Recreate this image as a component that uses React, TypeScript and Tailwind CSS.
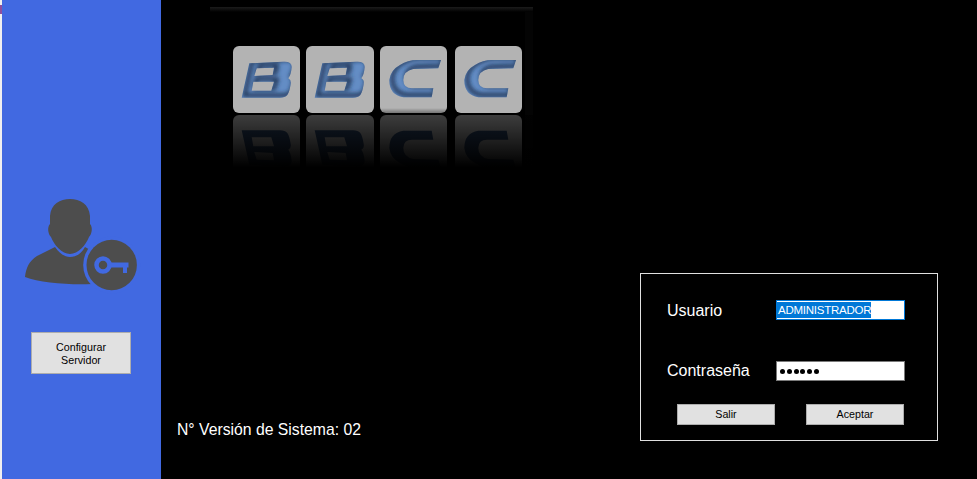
import React from 'react';

const B_PATH =
  'M8.7 51.7 L16.3 17.3 L50 15.7 Q58.7 15 58.7 21 Q58 29 55.3 32.3 Q58.5 34 57.7 38 Q56.5 46 54.3 49 Q52 51.7 47 51.7 Z M23.7 22.3 L21.3 30 L39.7 29 L41 21.7 Z M20.3 35.7 L18.7 44.7 L38.3 44.7 L41 35.7 Z';
const C_PATH =
  'M61 14 L58.3 22.3 L33.3 23 Q23.3 25 23.3 34 Q23.5 42.3 32 42.3 L53.3 42.3 L51.7 51.3 L23.3 51.3 Q9.3 49 9.3 34 Q10.5 24 20 19 Q28 14 36.7 14 Z';

const TILES = [
  { x: 23, w: 67, path: B_PATH, id: 'b1' },
  { x: 96, w: 68, path: B_PATH, id: 'b2' },
  { x: 170, w: 67, path: C_PATH, id: 'c1' },
  { x: 245, w: 67, path: C_PATH, id: 'c2' },
];

const LogoTile = ({ tile }: { tile: (typeof TILES)[number] }) => (
  <g transform={`translate(${tile.x} 0)`}>
    <rect width={tile.w} height="67" rx="6" fill="#b3b3b3" />
    <clipPath id={`clip-${tile.id}`}>
      <path d={tile.path} clipRule="evenodd" />
    </clipPath>
    <g filter="url(#edge)">
      <path d={tile.path} fillRule="evenodd" fill="#648dc5" />
      <g clipPath={`url(#clip-${tile.id})`}>
        <path
          d={tile.path}
          transform="translate(3 -2.4)"
          fillRule="evenodd"
          fill="none"
          stroke="#1f3050"
          strokeWidth="3.6"
          filter="url(#soft)"
        />
      </g>
    </g>
  </g>
);

// the BBCC logo with its reflection
const Logo = () => (
  <svg width="323" height="165" viewBox="0 0 323 165" className="block">
    <defs>
      <filter id="soft" x="-20%" y="-20%" width="140%" height="140%">
        <feGaussianBlur stdDeviation="2.2" />
      </filter>
      <filter id="edge" x="-10%" y="-10%" width="120%" height="120%">
        <feGaussianBlur stdDeviation="0.5" />
      </filter>
      <linearGradient id="fade" x1="0" y1="0" x2="0" y2="1">
        <stop offset="0" stopColor="#000" stopOpacity="0.66" />
        <stop offset="1" stopColor="#000" stopOpacity="1" />
      </linearGradient>
      <linearGradient id="topLine" x1="0" y1="0" x2="0" y2="1">
        <stop offset="0" stopColor="#1c1c1c" />
        <stop offset="1" stopColor="#000" />
      </linearGradient>
      <linearGradient id="tileShade" x1="0" y1="0" x2="0" y2="1">
        <stop offset="0" stopColor="#000" stopOpacity="0" />
        <stop offset="1" stopColor="#000" stopOpacity="0.35" />
      </linearGradient>
    </defs>
    <rect width="323" height="5" fill="url(#topLine)" />
    <rect x="315" y="5" width="8" height="155" fill="#040404" />
    <g transform="translate(0 39)">
      {TILES.map((tile) => (
        <LogoTile key={tile.id} tile={tile} />
      ))}
      <rect x="170" y="62" width="67" height="5" rx="3" fill="url(#tileShade)" />
    </g>
    <g transform="translate(0 175) scale(1 -1)">
      {TILES.map((tile) => (
        <g key={tile.id}>
          <rect x={tile.x} y="0" width={tile.w} height="67" rx="6" fill="#b3b3b3" />
          <path d={tile.path} transform={`translate(${tile.x} 0)`} fillRule="evenodd" fill="#2b4467" />
        </g>
      ))}
    </g>
    <rect x="0" y="108" width="323" height="52" fill="url(#fade)" />
    <rect x="0" y="160" width="323" height="5" fill="#000" />
  </svg>
);

// user silhouette with the key badge
const UserKeyIcon = () => (
  <svg width="120" height="100" viewBox="22 195 120 100" className="block">
    <path
      fill="#4d4d4d"
      d="M70 199 C80 199 89 204 90 216 L90 224 C93 227 92 234 89 237 C86 245 78 254 70 254 C62 254 54 245 51 237 C48 234 47 227 50 224 L50 216 C51 204 60 199 70 199 Z"
    />
    <path
      fill="#4d4d4d"
      d="M55 247 C60 254 65 257 70 257 C76 257 81 254 85 247 L92 251 L92 284 C70 285 40 283 25 277 C26 268 29 261 37 256 Z"
    />
    <circle cx="111.7" cy="265" r="28.5" fill="#4169e1" />
    <circle cx="111.7" cy="265" r="25.2" fill="#4d4d4d" />
    <circle cx="103" cy="265" r="6.5" fill="none" stroke="#4169e1" strokeWidth="4.5" />
    <path fill="#4169e1" d="M110 262.6 L128.5 262.6 L128.5 267.4 L127 267.4 L127 273 L123 273 L123 267.4 L110 267.4 Z" />
  </svg>
);

const FormButton = ({ label, className }: { label: string; className: string }) => (
  <button
    className={`bg-[#e1e1e1] border border-[#adadad] text-black text-[10.7px] leading-[13px] font-['Liberation_Sans',sans-serif] ${className}`}
  >
    {label}
  </button>
);

const App: React.FC = () => {
  return (
    <div className="w-[977px] h-[479px] flex overflow-hidden bg-black font-['Liberation_Sans',sans-serif]">
      {/* window edge */}
      <div className="w-[2px] h-full flex flex-col bg-[#f0f0f0]">
        <div className="h-[5px]" />
        <div className="h-[9px] bg-[#8e4f9e]" />
      </div>

      {/* left panel */}
      <div className="w-[159px] h-full bg-[#4169e1] flex flex-col items-start">
        <div className="mt-[195px] ml-[20px]">
          <UserKeyIcon />
        </div>
        <FormButton label="Configurar Servidor" className="mt-[37px] ml-[29px] w-[100px] h-[42px] px-5 pt-[1px]" />
      </div>

      {/* main */}
      <div className="flex-1 flex flex-col">
        <div className="ml-[49px] mt-[7px]">
          <Logo />
        </div>

        <div className="mt-auto flex items-end justify-between pl-[16px] pr-[39px] pb-[38px]">
          <p className="mb-[2px] text-white text-[15.75px] leading-[18px]">N° Versión de Sistema: 02</p>

          <div className="w-[298px] h-[168px] border border-[#e0e0e0] pt-[26px]">
            <div className="flex items-center pl-[26px] h-5">
              <span className="w-[109px] text-white text-base leading-[22px] mt-[1px]">Usuario</span>
              <div className="w-[129px] h-5 bg-white border border-[#0078d7] flex items-center">
                <span className="bg-[#0078d7] text-white text-[11.5px] leading-[16px] pl-[1px] tracking-[-0.25px]">
                  ADMINISTRADOR
                </span>
              </div>
            </div>

            <div className="flex items-center pl-[26px] h-5 mt-[41px]">
              <span className="w-[109px] text-white text-base leading-[22px]">Contraseña</span>
              <div className="w-[129px] h-5 bg-white border border-[#7a7a7a] flex items-center gap-[1.8px] pl-[3px]">
                {[0, 1, 2, 3, 4, 5].map((dot) => (
                  <span key={dot} className="w-[5px] h-[5px] rounded-full bg-black" />
                ))}
              </div>
            </div>

            <div className="flex pl-[36px] gap-[31px] mt-[23px]">
              <FormButton label="Salir" className="w-[98px] h-[21px]" />
              <FormButton label="Aceptar" className="w-[98px] h-[21px]" />
            </div>
          </div>
        </div>
      </div>
    </div>
  );
};

export default App;
